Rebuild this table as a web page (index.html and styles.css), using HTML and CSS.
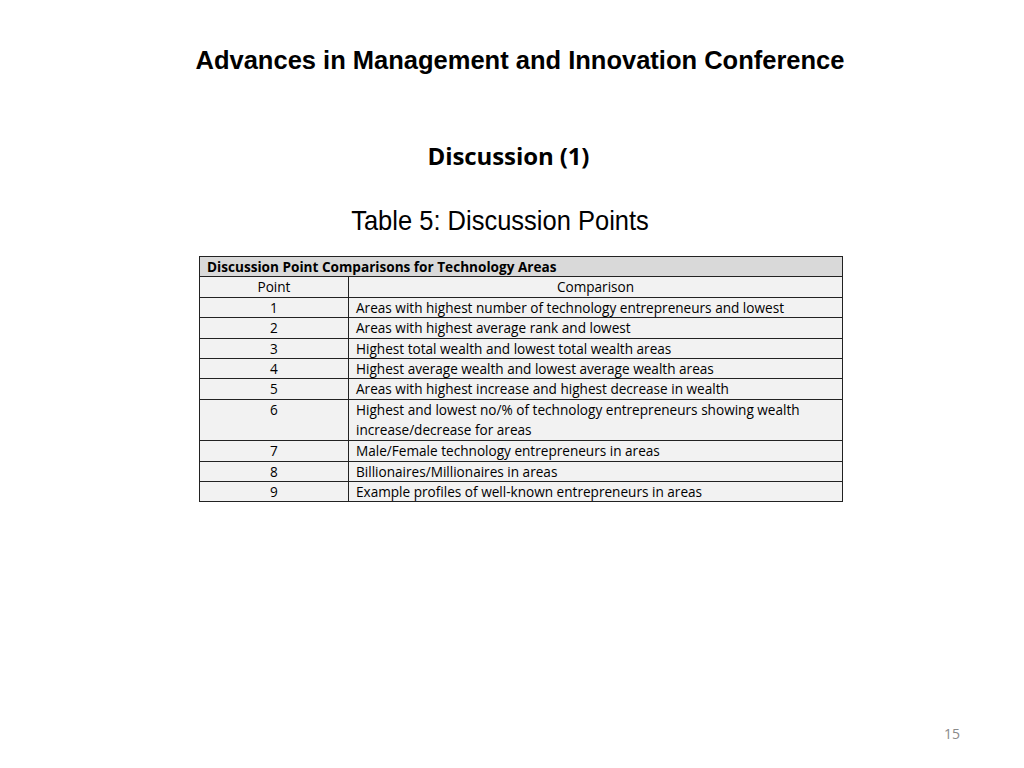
FILE: index.html
```html
<!DOCTYPE html>
<html>
<head>
<meta charset="utf-8">
<link rel="stylesheet" href="styles.css">
</head>
<body>
<div class="slide">
  <h1 class="conf">Advances in Management and Innovation Conference</h1>
  <h2 class="title">Discussion (1)</h2>
  <p class="caption">Table 5: Discussion Points</p>
  <table class="points">
    <tr class="head"><th colspan="2">Discussion Point Comparisons for Technology Areas</th></tr>
    <tr><td class="num">Point</td><td class="center">Comparison</td></tr>
    <tr><td class="num">1</td><td>Areas with highest number of technology entrepreneurs and lowest</td></tr>
    <tr><td class="num">2</td><td>Areas with highest average rank and lowest</td></tr>
    <tr><td class="num">3</td><td>Highest total wealth and lowest total wealth areas</td></tr>
    <tr><td class="num">4</td><td>Highest average wealth and lowest average wealth areas</td></tr>
    <tr><td class="num">5</td><td>Areas with highest increase and highest decrease in wealth</td></tr>
    <tr class="tall"><td class="num top">6</td><td>Highest and lowest no/% of technology entrepreneurs showing wealth<br>increase/decrease for areas</td></tr>
    <tr><td class="num">7</td><td>Male/Female technology entrepreneurs in areas</td></tr>
    <tr><td class="num">8</td><td>Billionaires/Millionaires in areas</td></tr>
    <tr><td class="num">9</td><td>Example profiles of well-known entrepreneurs in areas</td></tr>
  </table>
  <div class="pagenum">15</div>
</div>
</body>
</html>
```

FILE: styles.css
```css
html, body {
  margin: 0;
  padding: 0;
  background: #fff;
}
.slide {
  position: relative;
  width: 1024px;
  height: 768px;
  display: flex;
  flex-direction: column;
  align-items: center;
}
.conf {
  margin: 45px 0 0 0;
  font-family: "Liberation Sans", Arial, sans-serif;
  font-weight: bold;
  font-size: 25.5px;
  line-height: 30px;
  color: #000;
  padding-left: 16px;
}
.title {
  margin: 65px 0 0 0;
  font-family: "Open Sans", sans-serif;
  font-weight: bold;
  font-size: 24px;
  line-height: 32px;
  color: #000;
  letter-spacing: -0.1px;
  padding-right: 7px;
}
.caption {
  margin: 33px 0 0 0;
  font-family: "Liberation Sans", Arial, sans-serif;
  font-size: 25.5px;
  line-height: 30px;
  color: #000;
  padding-right: 24px;
  transform: scaleY(1.1);
}
.points {
  margin: 21px 0 0 18px;
  border-collapse: collapse;
  width: 644px;
  font-family: "Open Sans", sans-serif;
  font-size: 13.6px;
  color: #000;
}
.points th, .points td {
  border: 1.5px solid #222;
  padding: 0 7px;
  line-height: 19.4px;
  background: #f2f2f2;
  text-align: left;
  vertical-align: middle;
}
.points .head th {
  background: #d9d9d9;
  font-weight: bold;
}
.points td.num {
  width: 134px;
  text-align: center;
}
.points td.center {
  text-align: center;
}
.points tr.tall td {
  line-height: 20.2px;
}
.points td.top {
  vertical-align: top;
}
.pagenum {
  position: absolute;
  left: 944px;
  top: 724px;
  font-family: "Open Sans", sans-serif;
  font-size: 14px;
  color: #8a8a8a;
}
```
